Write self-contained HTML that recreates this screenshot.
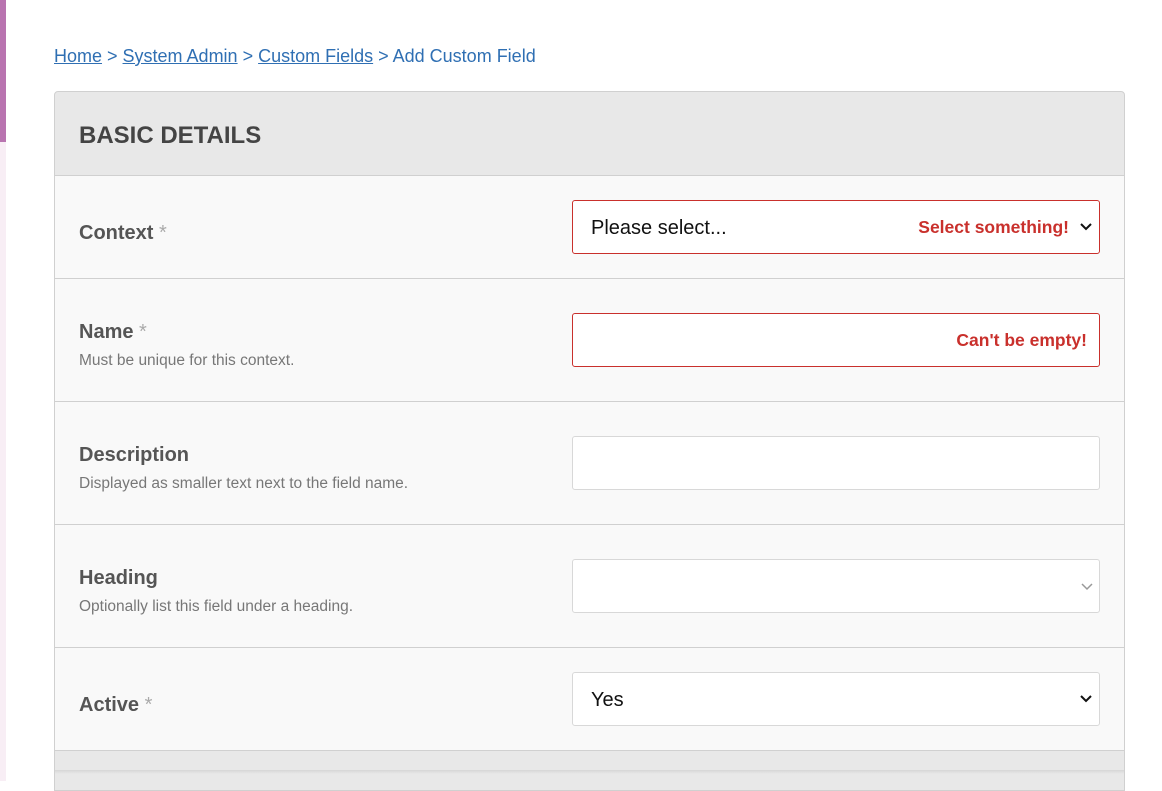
<!DOCTYPE html>
<html><head><style>
*{box-sizing:border-box;margin:0;padding:0}
body{width:1162px;height:781px;overflow:hidden;background:#fff;font-family:"Liberation Sans","DejaVu Sans",sans-serif;position:relative}
.strip{position:absolute;left:0;top:0;width:6px;height:142px;background:#b974b0}
.strip2{position:absolute;left:0;top:142px;width:6px;height:639px;background:#f8eef5}
.bc{position:absolute;left:54px;top:46px;font-size:18px;color:#2f6fb3}
.bc a{color:#2f6fb3;text-decoration:underline}
.panel{position:absolute;left:54px;top:91px;width:1071px;height:700px;border:1px solid #d0d0d0;border-radius:4px 4px 0 0;background:#e8e8e8;overflow:hidden}
.hd{height:84px;border-bottom:1px solid #d0d0d0;padding:30px 24px;font-size:24px;font-weight:bold;color:#444}
.row{height:123px;background:#f9f9f9;border-bottom:1px solid #d0d0d0;position:relative}
.row.first,.row.last{height:103px}
.lab{position:absolute;left:24px;font-size:20px;font-weight:bold;color:#555}
.lab .s{color:#aaa;font-weight:normal}
.sub{position:absolute;left:24px;font-size:15.5px;color:#777}
.inp{position:absolute;left:517px;width:528px;height:54px;border:1px solid #d8d8d8;border-radius:3px;background:#fff;font-size:20px;color:#111}
.err{border-color:#c9302c}
.et{position:absolute;right:12px;top:16px;font-size:17.5px;font-weight:bold;color:#c9302c}
.ch{position:absolute;right:6px;top:18px}
.shadow{position:absolute;left:0;right:0;top:678px;height:4px;background:linear-gradient(#d6d6d6,#e8e8e8)}
</style></head><body>
<div class="strip"></div><div class="strip2"></div>
<div class="bc"><a>Home</a> &gt; <a>System Admin</a> &gt; <a>Custom Fields</a> &gt; Add Custom Field</div>
<div class="panel">
<div class="hd">BASIC DETAILS</div>
<div class="row first">
<div class="lab" style="top:46px">Context <span class="s">*</span></div>
<div class="inp err" style="top:24px"><span style="position:absolute;left:18px;top:16px">Please select...</span><span class="et" style="right:30px">Select something!</span>
<svg class="ch" width="14" height="14" viewBox="0 0 14 14"><path d="M2 5l5 5 5-5" fill="none" stroke="#111" stroke-width="2"/></svg></div>
</div>
<div class="row">
<div class="lab" style="top:42px">Name <span class="s">*</span></div>
<div class="sub" style="top:73px">Must be unique for this context.</div>
<div class="inp err" style="top:34px"><span class="et">Can't be empty!</span></div>
</div>
<div class="row">
<div class="lab" style="top:42px">Description</div>
<div class="sub" style="top:73px">Displayed as smaller text next to the field name.</div>
<div class="inp" style="top:34px"></div>
</div>
<div class="row">
<div class="lab" style="top:42px">Heading</div>
<div class="sub" style="top:73px">Optionally list this field under a heading.</div>
<div class="inp" style="top:34px"><svg class="ch" width="14" height="14" viewBox="0 0 14 14" style="right:5px;top:19px"><path d="M2 5l5 5 5-5" fill="none" stroke="#999" stroke-width="1.5"/></svg></div>
</div>
<div class="row last">
<div class="lab" style="top:46px">Active <span class="s">*</span></div>
<div class="inp" style="top:24px"><span style="position:absolute;left:18px;top:16px">Yes</span>
<svg class="ch" width="14" height="14" viewBox="0 0 14 14"><path d="M2 5l5 5 5-5" fill="none" stroke="#111" stroke-width="2"/></svg></div>
</div>
<div class="shadow"></div>
</div>
</body></html>
